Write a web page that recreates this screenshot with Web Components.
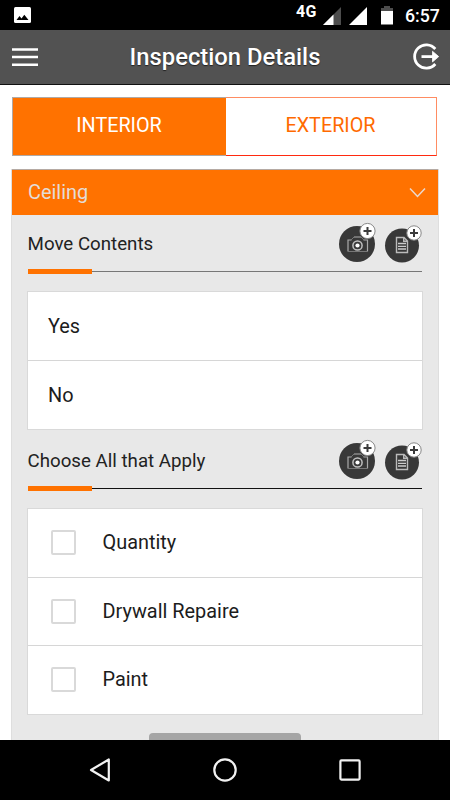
<!DOCTYPE html>
<html lang="en">
<head>
<meta charset="utf-8">
<meta name="viewport" content="width=device-width, initial-scale=1">
<title>Inspection Details</title>
<style>
  body {
    margin: 0;
    background: #fff;
    font-family: Roboto, sans-serif;
  }
</style>
</head>
<body>
<inspection-app></inspection-app>

<script>
class StatusBar extends HTMLElement {
  constructor() {
    super();
    this.attachShadow({ mode: 'open' }).innerHTML = `
      <style>
        :host {
          display: flex;
          flex: none;
          align-items: center;
          height: 30px;
          background: #000;
          color: #fff;
        }
        svg { display: block; flex: none; }
        .picture { margin-left: 14px; }
        .network {
          margin: 0 5px 7px auto;
          font-size: 16px;
          line-height: 16px;
          font-weight: 700;
          letter-spacing: 0.5px;
        }
        .time {
          width: 45px;
          margin-left: 3px;
          padding-top: 1px;
          font-size: 17.7px;
          line-height: 22px;
          font-weight: 500;
          white-space: nowrap;
        }
      </style>
      <svg class="picture" width="17" height="16" viewBox="0 0 17 16">
        <rect width="17" height="16" rx="1.5" fill="#fff"/>
        <path d="M2.5 13 L5.5 9 L7.5 11.5 L10.3 7.7 L14.5 13 Z" fill="#000"/>
      </svg>
      <span class="network">4G</span>
      <svg width="80" height="30" viewBox="322 0 80 30">
        <path d="M323 25 L341 7 V25 Z" fill="#4d4d4d"/>
        <path d="M323 25 L333.5 14.5 V25 Z" fill="#fff"/>
        <path d="M349 25 L367 7 V25 Z" fill="#fff"/>
        <path d="M381 11 V8 H384 V6 H390 V8 H393 V11 Z" fill="#4d4d4d"/>
        <path d="M381 11 H393 V24.5 H381 Z" fill="#fff"/>
      </svg>
      <span class="time">6:57</span>
    `;
  }
}
customElements.define('status-bar', StatusBar);

class AppHeader extends HTMLElement {
  constructor() {
    super();
    this.attachShadow({ mode: 'open' }).innerHTML = `
      <style>
        :host {
          display: flex;
          flex: none;
          align-items: center;
          justify-content: space-between;
          box-sizing: border-box;
          height: 55px;
          padding: 0 10px 0 12px;
          background: #525252;
          border-bottom: 1px solid #111;
          color: #fff;
        }
        h1 {
          margin: 0 1px 0 0;
          font-size: 23.8px;
          line-height: 30px;
          font-weight: 500;
          text-shadow: 0 1px 1px #222;
        }
        svg { display: block; }
      </style>
      <svg width="27" height="20" viewBox="0 0 27 20" stroke="#fff" stroke-width="2.6">
        <path d="M0 2.5 H26 M0 10 H26 M0 17.7 H26"/>
      </svg>
      <h1><slot></slot></h1>
      <svg width="28" height="28" viewBox="0 0 28 28" fill="none" stroke="#fff" stroke-width="2.8">
        <path d="M23.3 6 A11.7 11.7 0 1 0 23.3 21"/>
        <path d="M9.5 13.6 H23"/>
        <path d="M20.5 8.3 L26.7 13.6 L20.5 18.9 Z" fill="#fff" stroke-width="0.8"/>
      </svg>
    `;
  }
}
customElements.define('app-header', AppHeader);

class TabItem extends HTMLElement {
  constructor() {
    super();
    this.attachShadow({ mode: 'open' }).innerHTML = `
      <style>
        :host {
          display: block;
          flex: 1;
          box-sizing: border-box;
          height: 59px;
          padding: 14px 1px 0 0;
          border: 1px solid #ff8c62;
          border-bottom-color: #ff2a10;
          border-left: 0;
          color: #ff6a00;
          font-size: 19.8px;
          line-height: 27px;
          text-align: center;
        }
        :host([active]) {
          flex: none;
          width: 214px;
          border: 1px solid #b0a9a5;
          border-right: 0;
          background: #ff7200;
          color: #fff;
        }
      </style>
      <slot></slot>
    `;
  }
}
customElements.define('tab-item', TabItem);

class InspectionPanel extends HTMLElement {
  constructor() {
    super();
    this.attachShadow({ mode: 'open' }).innerHTML = `
      <style>
        :host {
          display: block;
          box-sizing: border-box;
          background: #e8e8e8;
          border: solid #dedede;
          border-width: 0 1px;
        }
        .title {
          display: flex;
          align-items: center;
          justify-content: space-between;
          box-sizing: border-box;
          height: 46px;
          padding: 0 11px 0 16px;
          border-top: 1px solid #b5aaa3;
          background: #ff7200;
          color: #e4dcd6;
          font-size: 19.9px;
          line-height: 24px;
        }
        .body { padding: 0 15px; }
      </style>
      <div class="title">
        <slot name="title"></slot>
        <svg width="18" height="12" viewBox="0 0 18 12" fill="none" stroke="#ead9cf" stroke-width="1.5">
          <path d="M1 1.5 L8.5 9.5 L16 1.5"/>
        </svg>
      </div>
      <div class="body"><slot></slot></div>
    `;
  }
}
customElements.define('inspection-panel', InspectionPanel);

class SectionHeading extends HTMLElement {
  constructor() {
    super();
    this.attachShadow({ mode: 'open' }).innerHTML = `
      <style>
        :host {
          display: block;
          box-sizing: border-box;
          height: 76px;
          padding: 7px 1px 0 0.6px;
          --rule: #777;
        }
        :host([spaced]) {
          height: 78px;
          padding-top: 9px;
          --rule: #111;
        }
        .row {
          display: flex;
          align-items: center;
          justify-content: space-between;
          height: 42px;
          color: #222;
          font-size: 18.7px;
          line-height: 22px;
          white-space: nowrap;
        }
        span { padding-top: 2px; }
        svg { display: block; margin-right: -1px; }
        .rule {
          display: flex;
          align-items: center;
          height: 5px;
          margin-top: 5px;
        }
        .rule i { width: 64px; height: 5px; background: #ff7200; }
        .rule b { flex: 1; height: 1px; background: var(--rule); }
      </style>
      <div class="row">
        <span><slot></slot></span>
        <svg width="85" height="42" viewBox="338 222 85 42" fill="none">
          <circle cx="357" cy="244" r="18" fill="#383838"/>
          <path d="M348 251.5 V240 H351.5 M354 237 H361 M363.5 240 H367.5 V251.5" stroke="#aaa" stroke-width="1.2"/>
          <path d="M351 240 L354 237 H361 L364 240 M348 251.5 H367.5" stroke="#777"/>
          <circle cx="357.5" cy="245.5" r="4.6" stroke="#c0c0c0" stroke-width="1.5"/>
          <circle cx="357.5" cy="245.5" r="2.1" fill="#fff"/>
          <circle cx="367.5" cy="231" r="7.6" fill="#fff" stroke="#888"/>
          <path d="M363.5 231 H371.5 M367.5 227 V235" stroke="#3b3b3b" stroke-width="2"/>
          <circle cx="402" cy="245.5" r="17" fill="#383838"/>
          <path d="M396.5 237.5 H404 L407.5 241 V252.5 H396.5 Z M403.7 237.5 V241.3 H407.5" stroke="#bbb" stroke-width="1.4"/>
          <path d="M398 243.5 H406 M398 246.3 H406 M398 249 H406" stroke="#ccc" stroke-width="1.3"/>
          <circle cx="414" cy="233" r="7.2" fill="#fff" stroke="#888"/>
          <path d="M410 233 H418 M414 229 V237" stroke="#3b3b3b" stroke-width="2"/>
        </svg>
      </div>
      <div class="rule"><i></i><b></b></div>
    `;
  }
}
customElements.define('section-heading', SectionHeading);

class OptionList extends HTMLElement {
  constructor() {
    super();
    this.attachShadow({ mode: 'open' }).innerHTML = `
      <style>
        :host {
          display: flex;
          flex-direction: column;
          gap: 1px;
          border: 1px solid #d9d9d9;
          background: #d6d6d6;
        }
      </style>
      <slot></slot>
    `;
  }
}
customElements.define('option-list', OptionList);

class OptionItem extends HTMLElement {
  constructor() {
    super();
    this.attachShadow({ mode: 'open' }).innerHTML = `
      <style>
        :host {
          display: flex;
          align-items: center;
          box-sizing: border-box;
          height: 68px;
          padding-left: 20px;
          background: #fff;
          color: #1c1c1c;
          font-size: 19.9px;
        }
        .box { display: none; }
        :host([check]) {
          height: 67.67px;
          padding: 0 0 0.6px 23px;
        }
        :host([check]) .box {
          display: block;
          box-sizing: border-box;
          width: 25px;
          height: 25px;
          margin-right: 26.5px;
          border: 2px solid #d9d9d9;
          border-radius: 2px;
        }
      </style>
      <span class="box"></span>
      <slot></slot>
    `;
  }
}
customElements.define('option-item', OptionItem);

class NavBar extends HTMLElement {
  constructor() {
    super();
    this.attachShadow({ mode: 'open' }).innerHTML = `
      <style>
        :host {
          display: flex;
          flex: none;
          align-items: center;
          justify-content: space-between;
          box-sizing: border-box;
          height: 60px;
          padding: 0 87px;
          background: #000;
        }
        svg { display: block; fill: none; stroke: #f2f2f2; stroke-width: 2.2; }
      </style>
      <svg width="26" height="26" viewBox="0 0 26 26"><path d="M4 13 L21.8 2.5 V23.5 Z" stroke-linejoin="round"/></svg>
      <svg width="26" height="26" viewBox="0 0 26 26"><circle cx="13" cy="13" r="10.7"/></svg>
      <svg width="26" height="26" viewBox="0 0 26 26"><rect x="3.4" y="3.4" width="19.2" height="19.2" rx="1"/></svg>
    `;
  }
}
customElements.define('nav-bar', NavBar);

class InspectionApp extends HTMLElement {
  constructor() {
    super();
    this.attachShadow({ mode: 'open' }).innerHTML = `
      <style>
        :host {
          display: flex;
          flex-direction: column;
          width: 450px;
          height: 800px;
          overflow: hidden;
        }
        main {
          flex: 1;
          min-height: 0;
          overflow: hidden;
        }
        .tabs { display: flex; margin: 12px 13px 13px 12px; }
        inspection-panel { margin: 0 11px; }
        .button {
          width: 152px;
          height: 40px;
          margin: 18px auto 0 122px;
          border-radius: 4px;
          background: #a5a5a5;
        }
      </style>
      <status-bar></status-bar>
      <app-header>Inspection Details</app-header>
      <main>
        <div class="tabs">
          <tab-item active>INTERIOR</tab-item>
          <tab-item>EXTERIOR</tab-item>
        </div>
        <inspection-panel>
          <span slot="title">Ceiling</span>
          <section-heading>Move Contents</section-heading>
          <option-list>
            <option-item>Yes</option-item>
            <option-item>No</option-item>
          </option-list>
          <section-heading spaced>Choose All that Apply</section-heading>
          <option-list>
            <option-item check>Quantity</option-item>
            <option-item check>Drywall Repaire</option-item>
            <option-item check>Paint</option-item>
          </option-list>
          <div class="button"></div>
        </inspection-panel>
      </main>
      <nav-bar></nav-bar>
    `;
  }
}
customElements.define('inspection-app', InspectionApp);
</script>
</body>
</html>
